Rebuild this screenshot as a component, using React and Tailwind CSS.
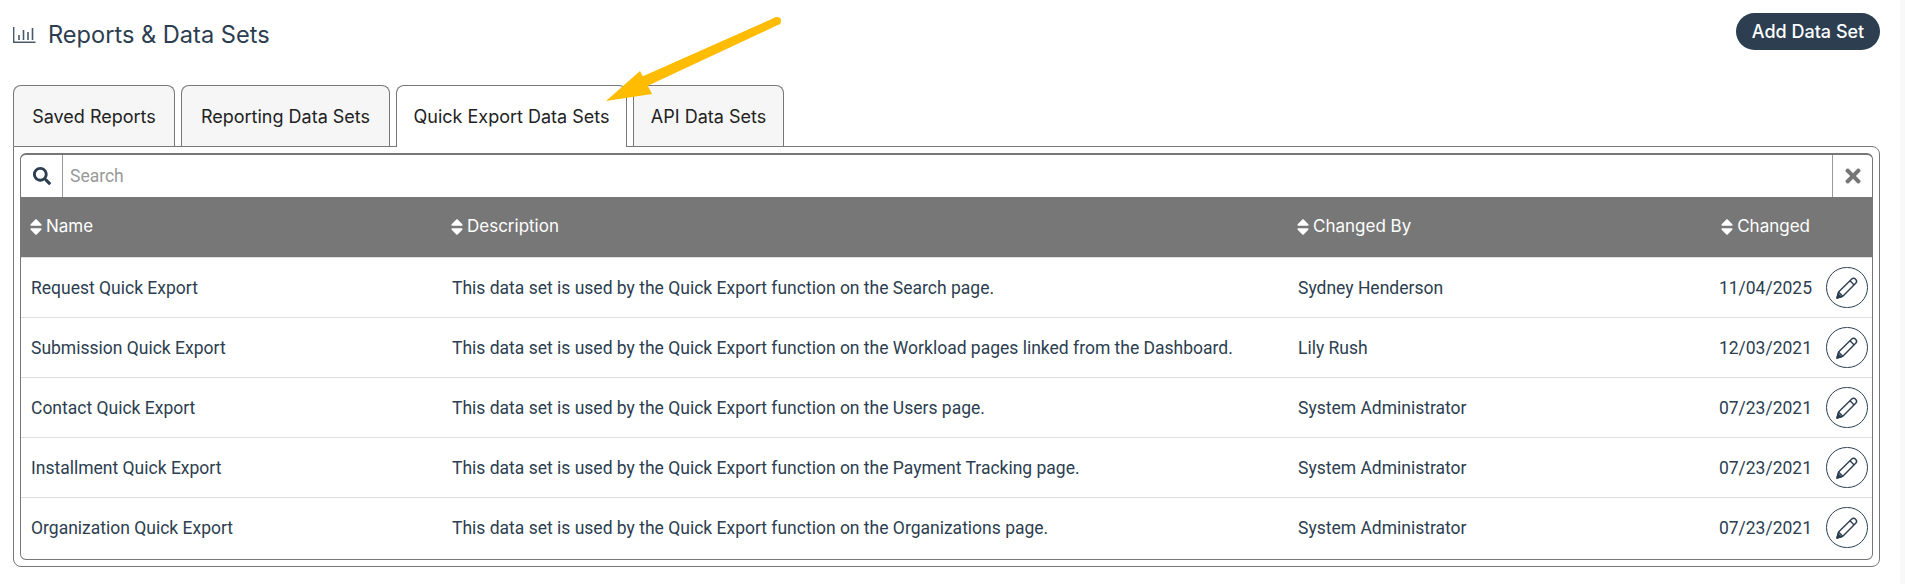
import React from 'react';
import { FaSearch, FaTimes, FaSort } from 'react-icons/fa';

const rows = [
    ['Request Quick Export', 'This data set is used by the Quick Export function on the Search page.', 'Sydney Henderson', '11/04/2025'],
    ['Submission Quick Export', 'This data set is used by the Quick Export function on the Workload pages linked from the Dashboard.', 'Lily Rush', '12/03/2021'],
    ['Contact Quick Export', 'This data set is used by the Quick Export function on the Users page.', 'System Administrator', '07/23/2021'],
    ['Installment Quick Export', 'This data set is used by the Quick Export function on the Payment Tracking page.', 'System Administrator', '07/23/2021'],
    ['Organization Quick Export', 'This data set is used by the Quick Export function on the Organizations page.', 'System Administrator', '07/23/2021'],
];

const PencilIcon = () => (
    <svg width="24" height="24" viewBox="0 0 24 24" fill="none" stroke="#2c3e50" strokeWidth="1.4" strokeLinejoin="round">
        <path d="M2 22 L3.5 16 L16.5 3.2 C17.8 2 19.4 2 20.6 3.2 C21.9 4.4 21.9 6 20.7 7.3 L7.8 20.3 Z" />
        <path d="M15 4.8 L19.2 9" />
        <path d="M3.5 16 L7.8 20.3" />
        <path d="M2 22 L3 18 L6.2 20.8 Z" fill="#2c3e50" />
    </svg>
);

const ChartIcon = () => (
    <svg width="23" height="17" viewBox="0 0 23 17" fill="none" stroke="#4a5a6a" strokeWidth="1.4">
        <path d="M0.7 0 V15.3 H22.5" />
        <path d="M6 8 V13 M10.5 3 V13 M15 5 V13 M19.5 1 V13" strokeWidth="1.6" />
    </svg>
);

const Tab = ({ label, width, active }) => (
    <div className={`flex h-[61px] items-center justify-center rounded-t-lg border border-[#777] text-[18px] text-[#222] ${width} ${active ? 'relative z-10 h-[62px] -mb-px border-b-0 bg-white' : 'border-b-0 bg-[#f6f6f6]'}`}>
        {label}
    </div>
);

const HeadCell = ({ children, className }) => (
    <div className={`flex items-center text-[17px] text-white ${className}`}>
        <FaSort className="text-[20px]" />
        {children}
    </div>
);

const App = () => {
    return (
        <div className="relative h-[584px] overflow-hidden bg-white font-['Inter',sans-serif]">
            <div className="mr-[5px] h-full bg-white pl-[13px] pr-[20px]">
                <div className="flex h-[85px] items-start justify-between pt-[13px]">
                    <div className="mt-[9px] flex items-center gap-[12px] text-[#2c3e50]">
                        <ChartIcon />
                        <h1 className="text-[23.6px] font-normal leading-[26px]">Reports &amp; Data Sets</h1>
                    </div>
                    <button className="h-[37px] w-[144px] rounded-full bg-[#2c3e50] text-[18px] font-medium text-white">Add Data Set</button>
                </div>
                <div className="flex gap-[6px]">
                    <Tab label="Saved Reports" width="w-[162px]" />
                    <Tab label="Reporting Data Sets" width="w-[209px]" />
                    <Tab label="Quick Export Data Sets" width="w-[231px]" active />
                    <Tab label="API Data Sets" width="w-[151px]" />
                </div>
                <div className="rounded-b-lg rounded-tr-lg border border-[#777] p-[6px]">
                    <div className="overflow-hidden rounded-md border border-t-2 border-[#777] pb-[2px] font-['Roboto',sans-serif]">
                        <div className="flex h-[42px] items-stretch">
                            <div className="flex w-[42px] items-center justify-center border-r border-[#999] text-[#2c3e50]">
                                <FaSearch className="text-[18px]" />
                            </div>
                            <div className="flex-1 pl-[7px] text-[17.5px] leading-[42px] text-[#999]">Search</div>
                            <div className="flex w-[40px] items-center justify-center border-l border-[#999] text-[#777]">
                                <FaTimes className="text-[22px]" />
                            </div>
                        </div>
                        <div className="grid h-[60px] grid-cols-[421px_846px_1fr] items-center bg-[#777] font-['Inter',sans-serif]">
                            <HeadCell className="pl-[5px]">Name</HeadCell>
                            <HeadCell className="pl-[5px]">Description</HeadCell>
                            <div className="flex items-center justify-between pl-[5px] pr-[62px]">
                                <HeadCell>Changed By</HeadCell>
                                <HeadCell>Changed</HeadCell>
                            </div>
                        </div>
                        {rows.map((row, index) => (
                            <div key={index} className="grid h-[60px] grid-cols-[421px_846px_1fr] items-center border-t border-[#ddd] text-[17.5px] text-[#2c3e50]">
                                <div className="pl-[10px] pt-[2px]">{row[0]}</div>
                                <div className="pl-[10px] pt-[2px]">{row[1]}</div>
                                <div className="flex items-center justify-between pl-[10px] pr-[4px]">
                                    <span className="pt-[2px]">{row[2]}</span>
                                    <span className="flex items-center gap-[14px]">
                                        <span className="pt-[2px]">{row[3]}</span>
                                        <span className="flex h-[41px] w-[42px] items-center justify-center rounded-full border border-[#2c3e50]">
                                            <PencilIcon />
                                        </span>
                                    </span>
                                </div>
                            </div>
                        ))}
                    </div>
                </div>
            </div>
            <div className="absolute bottom-0 right-0 top-0 w-[5px] bg-[#f8f8f8]" />
            <svg className="absolute left-[600px] top-[15px] z-20" width="185" height="90" viewBox="600 15 185 90">
                <circle cx="777" cy="21" r="4" fill="#ffbc00" />
                <path d="M778.7 24.6 L632.3 93 L627.7 83 L775.3 17.4 Z" fill="#ffbc00" />
                <path d="M606 101 L640 71 L652 94 Z" fill="#ffbc00" />
            </svg>
        </div>
    );
};

export default App;
